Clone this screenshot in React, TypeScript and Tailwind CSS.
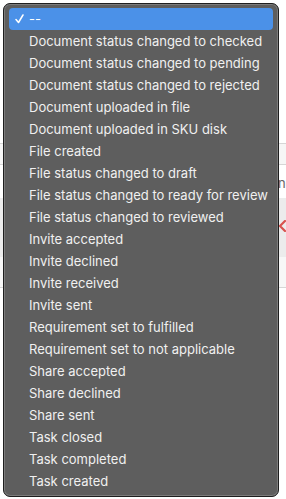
import React from "react";

const items = [
  "--",
  "Document status changed to checked",
  "Document status changed to pending",
  "Document status changed to rejected",
  "Document uploaded in file",
  "Document uploaded in SKU disk",
  "File created",
  "File status changed to draft",
  "File status changed to ready for review",
  "File status changed to reviewed",
  "Invite accepted",
  "Invite declined",
  "Invite received",
  "Invite sent",
  "Requirement set to fulfilled",
  "Requirement set to not applicable",
  "Share accepted",
  "Share declined",
  "Share sent",
  "Task closed",
  "Task completed",
  "Task created",
];

export default function App() {
  return (
    <div className="relative w-[286px] h-[499px] overflow-hidden bg-white" style={{ fontFamily: "Inter, 'Noto Sans', sans-serif" }}>
      {/* background page content */}
      <div className="flex flex-col">
        <div className="h-[143px] bg-white" />
        <div className="h-[21px] bg-[#f6f6f6] border-t border-[#d6d6d6]" />
        <div className="h-[34px] bg-white border-t border-[#d6d6d6] flex justify-end items-start">
          <div className="w-[8px] overflow-hidden mt-[12px]">
            <span className="block text-[13px] text-[#666] leading-none whitespace-nowrap">ng</span>
          </div>
        </div>
        <div className="h-[59px] bg-[#ececec] flex justify-end items-center">
          <svg width="8" height="12" viewBox="0 0 8 12" className="mb-[4px]">
            <path d="M7 1 L2 6 L7 11" fill="none" stroke="#d9534f" strokeWidth="2.2" strokeLinecap="round" />
          </svg>
        </div>
        <div className="h-[30px] bg-[#f7f7f7]" />
        <div className="h-[212px] bg-white border-t border-[#d6d6d6]" />
      </div>

      {/* menu overlay */}
      <div className="absolute left-[3px] top-[3px] w-[276px] h-[494px] rounded-[7px] border border-[#1e1e1e] bg-[#5e5e5e] shadow-[inset_0_0_0_1px_#7c7c7c]">
        <div className="flex flex-col px-[5px] pt-[4px]">
          {items.map((t, i) => (
            <div
              key={t}
              className={
                i === 0
                  ? "relative h-[22px] flex items-center pl-[20px] rounded-[4px] bg-[#4b91e8] text-white text-[13px]"
                  : "relative h-[22px] flex items-center pl-[20px] text-[#f0f0f0] text-[13px]"
              }
            >
              {i === 0 && (
                <svg className="absolute left-[6px] top-[6px]" width="9" height="10" viewBox="0 0 9 10">
                  <path d="M1 5.5 L3.5 8.5 L8 1" fill="none" stroke="white" strokeWidth="1.5" strokeLinecap="round" strokeLinejoin="round" />
                </svg>
              )}
              <span className="leading-none">{t}</span>
            </div>
          ))}
        </div>
      </div>
    </div>
  );
}
